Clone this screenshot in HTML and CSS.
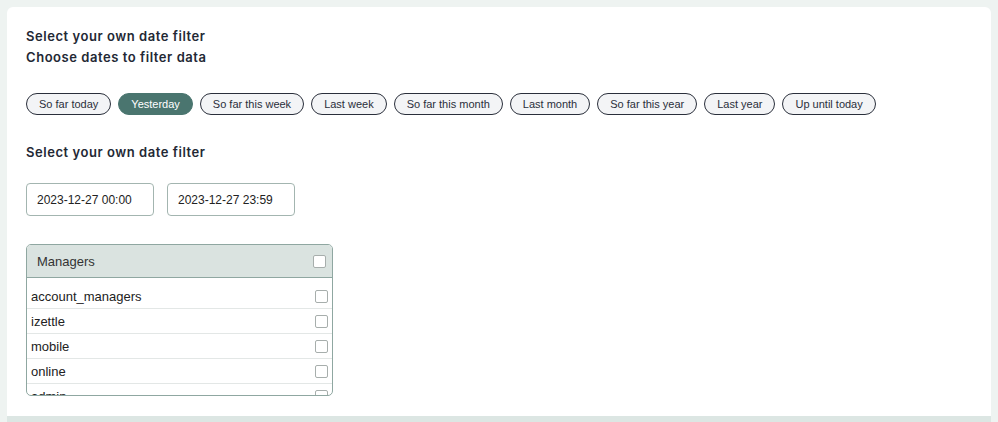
FILE: index.html
```html
<!DOCTYPE html>
<html lang="en">
<head>
    <meta charset="UTF-8">
    <meta name="viewport" content="width=device-width, initial-scale=1.0">
    <title>Date filter</title>
    <link rel="stylesheet" href="styles.css">
</head>
<body>

    <div class="card">
        <div class="card-title">
            <h3>Select your own date filter</h3>
            <h3>Choose dates to filter data</h3>
        </div>

        <!-- quick ranges -->
        <div class="ranges">
            <button class="pill">So far today</button>
            <button class="pill active">Yesterday</button>
            <button class="pill">So far this week</button>
            <button class="pill">Last week</button>
            <button class="pill">So far this month</button>
            <button class="pill">Last month</button>
            <button class="pill">So far this year</button>
            <button class="pill">Last year</button>
            <button class="pill">Up until today</button>
        </div>

        <h3 class="sub-title">Select your own date filter</h3>

        <div class="dates">
            <input type="text" class="date-input" value="2023-12-27 00:00">
            <input type="text" class="date-input" value="2023-12-27 23:59">
        </div>

        <div class="group-box">
            <div class="group-head">
                <span>Managers</span>
                <span class="check"></span>
            </div>
            <div class="group-list">
                <div class="group-row"><span>account_managers</span><span class="check"></span></div>
                <div class="group-row"><span>izettle</span><span class="check"></span></div>
                <div class="group-row"><span>mobile</span><span class="check"></span></div>
                <div class="group-row"><span>online</span><span class="check"></span></div>
                <div class="group-row"><span>admin</span><span class="check"></span></div>
                <div class="group-row"><span>support</span><span class="check"></span></div>
            </div>
        </div>
    </div>

    <div class="next-card"></div>

</body>
</html>
```

FILE: styles.css
```css
/* page */
body {
    margin: 0;
    padding: 7px 7px 0;
    background-color: #eef3f1;
    font-family: "Liberation Sans", Arial, sans-serif;
    color: #222;
}

.card {
    background-color: #fff;
    border-radius: 6px 6px 0 0;
    padding: 19px 19px 20px;
}

.card-title h3,
.sub-title {
    margin: 0;
    font-family: Inter, "Liberation Sans", sans-serif;
    font-size: 13px;
    font-weight: 600;
    line-height: 21px;
    color: #232834;
    letter-spacing: 0.55px;
}

/* quick range buttons */
.ranges {
    display: flex;
    gap: 7px;
    margin-top: 25px;
}

.pill {
    height: 22px;
    padding: 0 12px;
    border: 1px solid #2a2f3b;
    border-radius: 12px;
    background-color: #f3f4f6;
    font-family: "Liberation Sans", Arial, sans-serif;
    font-size: 11px;
    color: #2a2f3b;
}

.pill.active {
    background-color: #4a756f;
    border-color: #4a756f;
    color: #fff;
}

.sub-title {
    margin-top: 27px;
}

/* date inputs */
.dates {
    display: flex;
    gap: 13px;
    margin-top: 20px;
}

.date-input {
    width: 128px;
    height: 33px;
    box-sizing: border-box;
    padding: 0 10px;
    border: 1px solid #a3b5b0;
    border-radius: 4px;
    font-family: "Liberation Sans", Arial, sans-serif;
    font-size: 12px;
    color: #222;
}

/* managers list */
.group-box {
    width: 305px;
    margin-top: 28px;
    border: 1px solid #8fa7a1;
    border-radius: 5px;
    overflow: hidden;
}

.group-head {
    display: flex;
    justify-content: space-between;
    align-items: center;
    height: 32px;
    padding: 0 5px 0 10px;
    background-color: #dae3e0;
    border-bottom: 1px solid #8fa7a1;
    font-size: 13px;
    color: #333;
}

.group-list {
    height: 117px;
    padding-top: 6px;
    box-sizing: border-box;
    overflow: hidden;
}

.group-row {
    display: flex;
    justify-content: space-between;
    align-items: center;
    height: 24px;
    padding: 0 4px;
    border-bottom: 1px solid #e3e7e6;
    font-size: 13px;
}

.check {
    width: 11px;
    height: 11px;
    border: 1px solid #a7aeac;
    border-radius: 2px;
    background-color: #fff;
}

.group-head .check {
    margin-right: 1px;
}

.next-card {
    height: 20px;
    background-color: #dce6e3;
}
```
